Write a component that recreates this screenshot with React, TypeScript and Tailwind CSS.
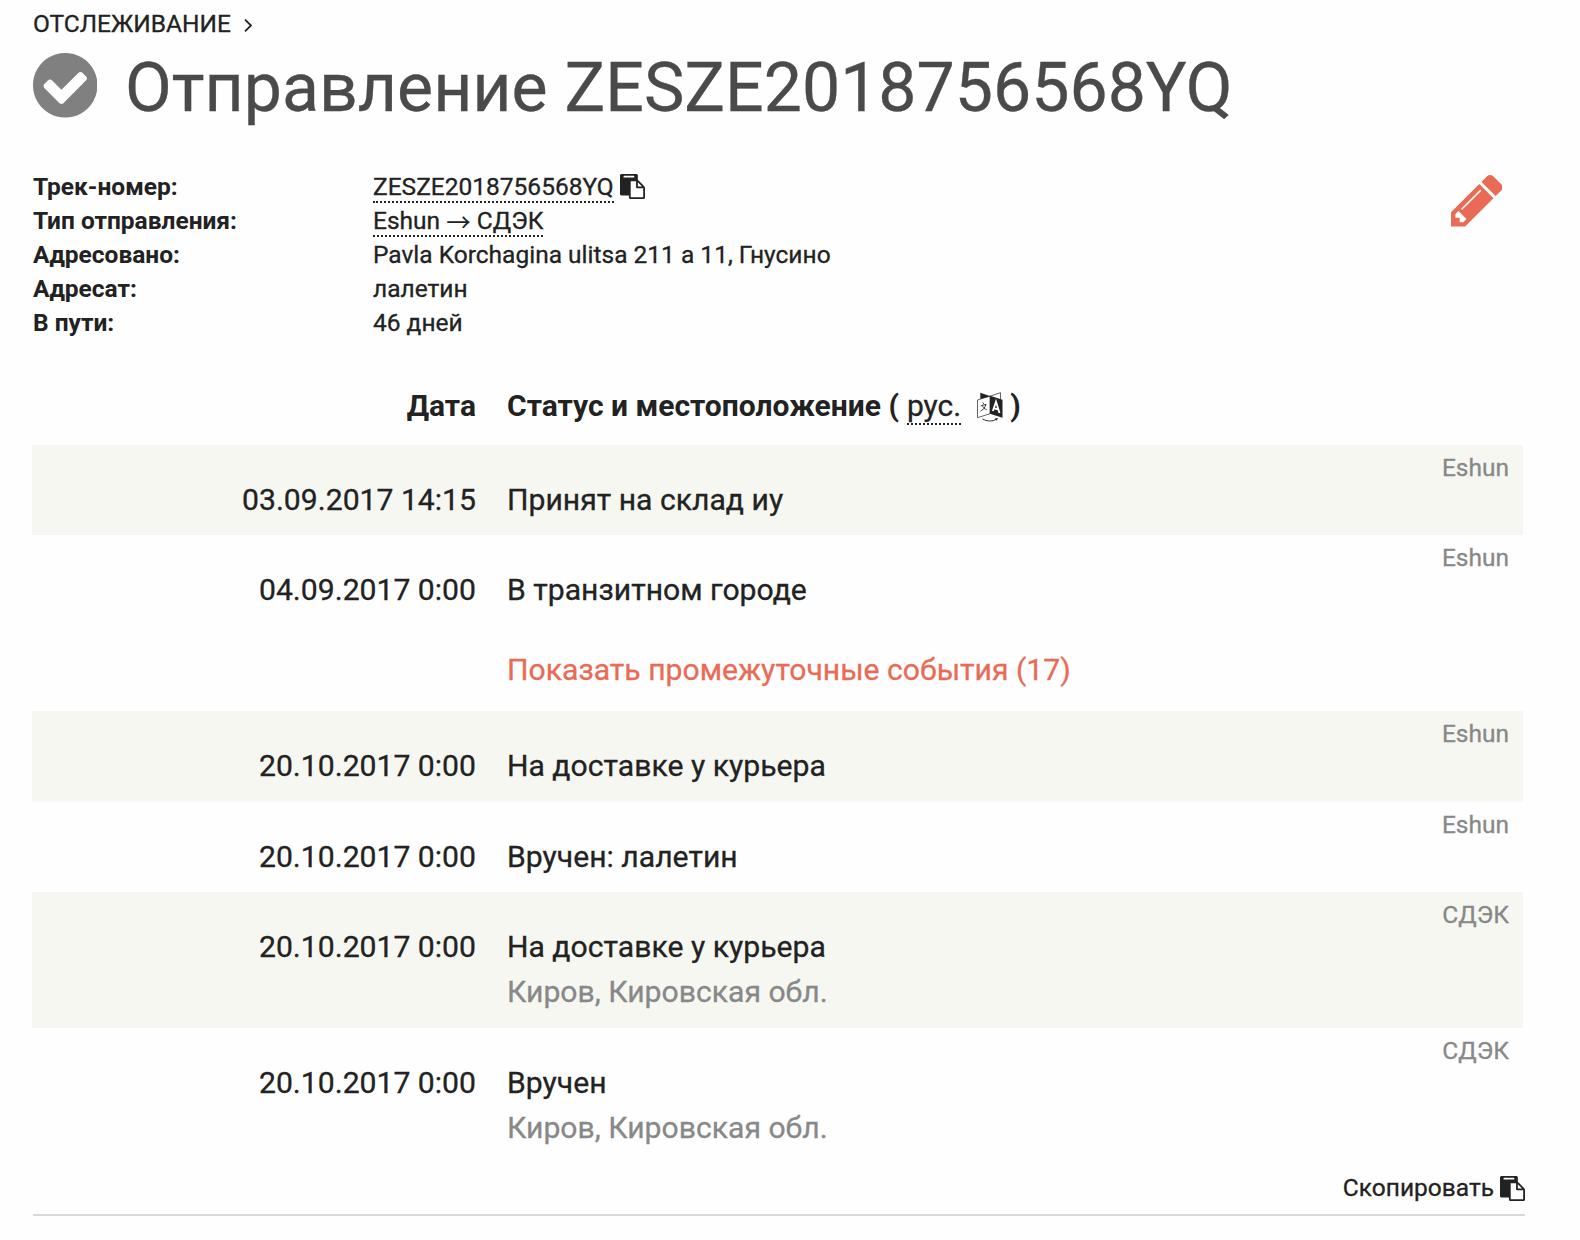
import React from 'react';

type TrackingEvent = {
  date: string;
  status: string;
  place?: string;
  service: string;
  shaded?: boolean;
};

const firstEvents: TrackingEvent[] = [
  { date: '03.09.2017 14:15', status: 'Принят на склад иу', service: 'Eshun', shaded: true },
  { date: '04.09.2017 0:00', status: 'В транзитном городе', service: 'Eshun' },
];

const lastEvents: TrackingEvent[] = [
  { date: '20.10.2017 0:00', status: 'На доставке у курьера', service: 'Eshun', shaded: true },
  { date: '20.10.2017 0:00', status: 'Вручен: лалетин', service: 'Eshun' },
  { date: '20.10.2017 0:00', status: 'На доставке у курьера', place: 'Киров, Кировская обл.', service: 'СДЭК', shaded: true },
  { date: '20.10.2017 0:00', status: 'Вручен', place: 'Киров, Кировская обл.', service: 'СДЭК' },
];

function CheckIcon() {
  return (
    <svg viewBox="128 128 1536 1536" fill="currentColor" className="-mt-1.5 mr-7 size-[64.5px] text-[#808080]">
      <path d="M1412 734q0-28-18-46l-91-90q-19-19-45-19t-45 19l-408 407-226-226q-19-19-45-19t-45 19l-91 90q-18 18-18 46 0 27 18 45l362 362q19 19 45 19 27 0 46-19l543-543q18-18 18-45zm252 162q0 209-103 385.5t-279.5 279.5-385.5 103-385.5-103-279.5-279.5-103-385.5 103-385.5 279.5-279.5 385.5-103 385.5 103 279.5 279.5 103 385.5z" />
    </svg>
  );
}

function PencilIcon() {
  return (
    <svg viewBox="128 149 1515 1515" fill="currentColor" className="mt-[5px] mr-[78px] size-[51.5px] text-[#e96b56]">
      <path d="M491 1536l91-91-235-235-91 91v107h128v128h107zm523-928q0-22-22-22-10 0-17 7l-542 542q-7 7-7 17 0 22 22 22 10 0 17-7l542-542q7-7 7-17zm-54-192l416 416-832 832h-416v-416zm683 96q0 53-37 90l-166 166-416-416 166-165q36-38 90-38 53 0 91 38l235 234q37 39 37 91z" />
    </svg>
  );
}

function PasteIcon() {
  return (
    <svg viewBox="0 0 1792 1792" fill="currentColor" className="size-[25px]">
      <path d="M768 1664h896v-640h-416q-40 0-68-28t-28-68v-416h-384v1152zm256-1440v-64q0-13-9.5-22.5t-22.5-9.5h-704q-13 0-22.5 9.5t-9.5 22.5v64q0 13 9.5 22.5t22.5 9.5h704q13 0 22.5-9.5t9.5-22.5zm256 672h299l-299-299v299zm512 128v672q0 40-28 68t-68 28h-960q-40 0-68-28t-28-68v-160h-544q-40 0-68-28t-28-68v-1344q0-40 28-68t68-28h1088q40 0 68 28t28 68v328q21 13 36 28l408 408q28 28 48 76t20 88z" />
    </svg>
  );
}

// Folded booklet with a hieroglyph on the left page and a letter on the right one
function LanguageIcon() {
  return (
    <svg viewBox="0 0 26 30" fill="none" stroke="currentColor" className="h-[30px] w-[26px]">
      <path d="M3.3 0.8L13.5 4.3L3.3 7z" fill="currentColor" stroke="none" />
      <path d="M13 4.2L23.5 0.7V7" strokeWidth="0.7" />
      <path d="M0.5 8L13 4V21.7L0.5 25.7z" strokeWidth="0.7" />
      <path d="M13 3.7L25.5 7.7V25.8L13 21.8z" fill="currentColor" stroke="none" />
      <path d="M5.8 10.5L6.8 12M3.8 13.9L9 12.3C8 15.5 6 18 3.6 19.2M5.6 14.2C6.5 16 7.8 17.2 9.6 17.6" strokeWidth="0.9" />
      <path d="M15.9 19L19 9.8L22.5 21M16.8 16.2L21.3 17.5" stroke="white" strokeWidth="1.9" />
      <path d="M5.5 27Q12.5 31 19.5 27.2" strokeWidth="0.9" />
      <path d="M18 26.5L21 26L19.7 28.8z" fill="currentColor" stroke="none" />
    </svg>
  );
}

function EventRow({ event }: { event: TrackingEvent }) {
  return (
    <div className={`flex pt-8 text-[30.15px] ${event.place ? 'h-[136px]' : 'h-[90.5px]'} ${event.shaded ? 'bg-[#f7f7f2]' : ''}`}>
      <div className="w-[444px] text-right">{event.date}</div>
      <div className="ml-[31px] flex-1">
        <div>{event.status}</div>
        {event.place && <div className="text-[#888888]">{event.place}</div>}
      </div>
      <div className="-mt-8 pt-1 pr-[14px] text-[24.5px] leading-[38px] text-[#888888]">{event.service}</div>
    </div>
  );
}

export default function App() {
  return (
    <div className="h-[1240px] w-[1580px] overflow-hidden bg-[#fefefe] pl-[33px] font-[Roboto,sans-serif] text-[#222222] [-webkit-text-stroke:0.3px]">
      <div className="flex items-center pt-2 text-[24.5px] leading-8">
        ОТСЛЕЖИВАНИЕ
        <svg viewBox="0 0 8 13" fill="none" stroke="currentColor" strokeWidth="1.8" className="mt-0.5 ml-[13px] h-[13px] w-2">
          <path d="M1 0.7L7 6.5L1 12.3" />
        </svg>
      </div>
      <h1 className="-ml-[0.5px] flex items-center text-[68px] leading-[97px] text-[#4a4a4a]">
        <CheckIcon />
        Отправление ZESZE2018756568YQ
      </h1>
      <div className="mt-[33px] flex text-[24.5px] leading-[34px]">
        <div className="w-[340px] font-bold [-webkit-text-stroke:0px]">
          <div>Трек-номер:</div>
          <div>Тип отправления:</div>
          <div>Адресовано:</div>
          <div>Адресат:</div>
          <div>В пути:</div>
        </div>
        <div className="flex-1">
          <div className="flex h-[34px] items-start gap-1.5">
            <div>
              <span className="border-b-2 border-dotted border-[#222222]">ZESZE2018756568YQ</span>
            </div>
            <span className="mt-1"><PasteIcon /></span>
          </div>
          <div className="h-[34px]">
            <span className="border-b-2 border-dotted border-[#222222]">
              Eshun <span className="relative top-[3px] font-['Noto_Sans_CJK_JP'] leading-none [-webkit-text-stroke:0px]">→</span> СДЭК
            </span>
          </div>
          <div>Pavla Korchagina ulitsa 211 a 11, Гнусино</div>
          <div>лалетин</div>
          <div>46 дней</div>
        </div>
        <PencilIcon />
      </div>
      <div className="-ml-px w-[1491px] text-[30px] leading-[45px]">
        <div className="mt-[43px] flex h-[61.5px] font-bold [-webkit-text-stroke:0px]">
          <div className="w-[444px] text-right">Дата</div>
          <div className="ml-[31px] flex">
            Статус и местоположение (
            <span className="ml-2 self-start">
              <span className="border-b-2 border-dotted border-[#222222] font-normal [-webkit-text-stroke:0.3px]">рус.</span>
            </span>
            <span className="mt-[9px] mr-[7px] ml-4"><LanguageIcon /></span>
            )
          </div>
        </div>
        {firstEvents.map((event) => <EventRow key={event.status} event={event} />)}
        <div className="flex h-[85.5px] pt-[21.5px] pl-[475px] text-[30.15px] text-[#e96b56]">Показать промежуточные события (17)</div>
        {lastEvents.map((event, i) => <EventRow key={i} event={event} />)}
      </div>
      <div className="flex h-[51.5px] w-[1492px] items-center justify-end gap-[6px] border-b-2 border-[#d8d8d8] text-[24.5px]">
        Скопировать
        <PasteIcon />
      </div>
    </div>
  );
}
